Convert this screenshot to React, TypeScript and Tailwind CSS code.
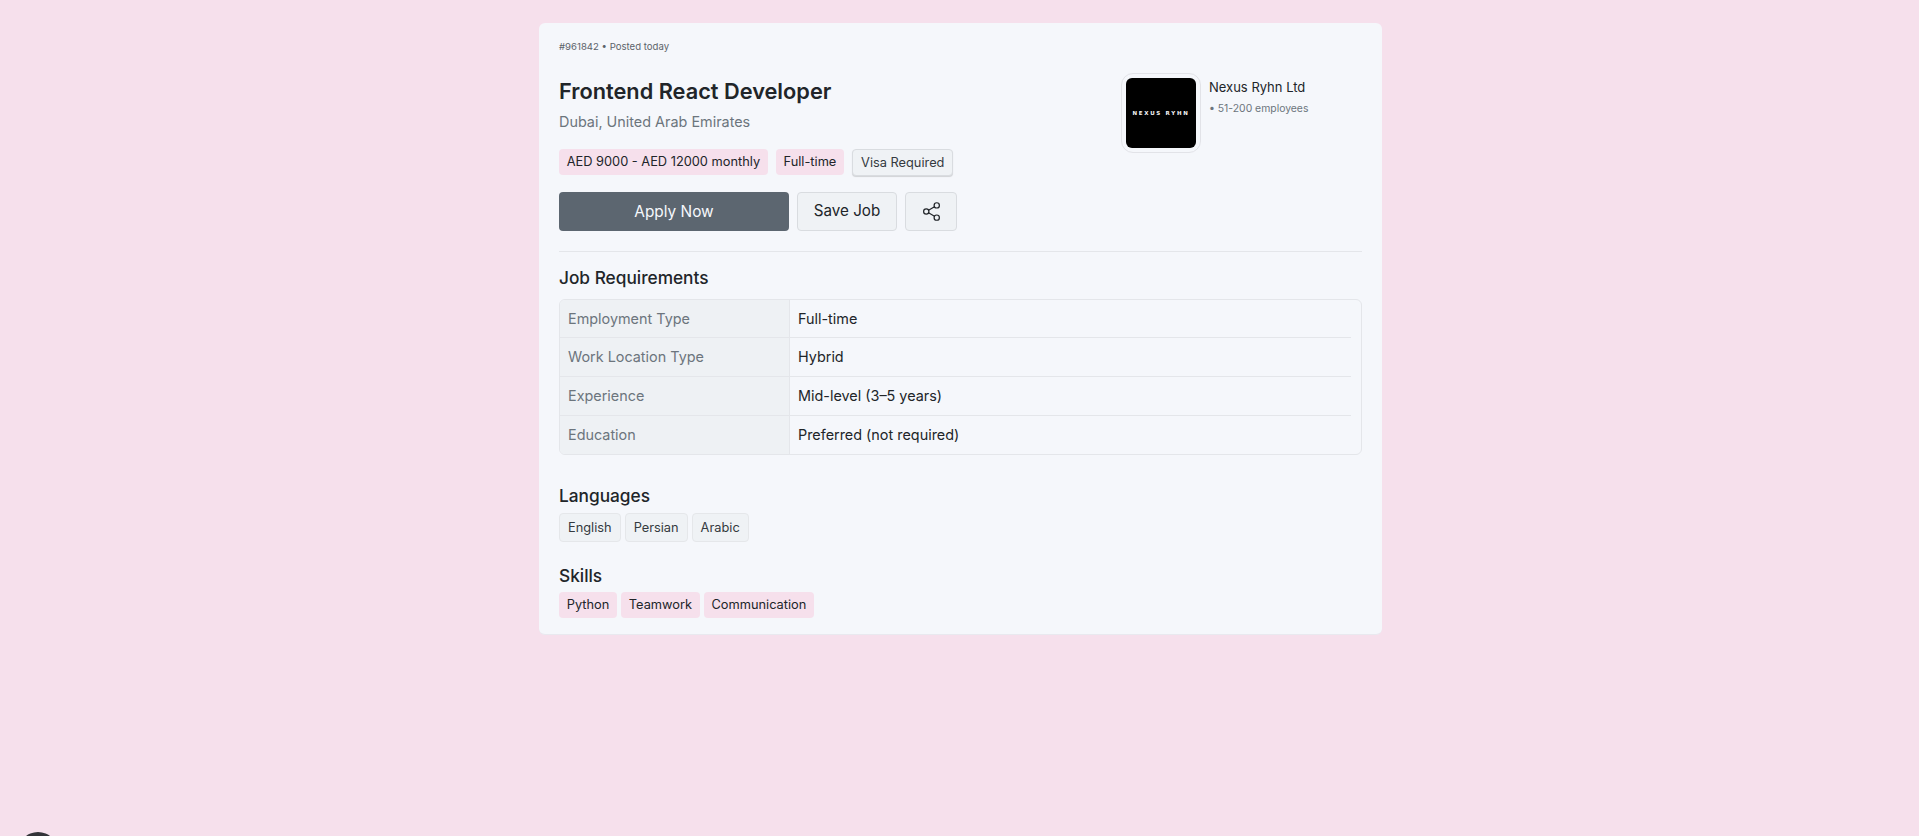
import React from 'react';
import { Share2 } from 'lucide-react';

const requirements = [
  { label: 'Employment Type', value: 'Full-time' },
  { label: 'Work Location Type', value: 'Hybrid' },
  { label: 'Experience', value: 'Mid-level (3–5 years)' },
  { label: 'Education', value: 'Preferred (not required)' },
];

const PinkChip: React.FC<{ children: React.ReactNode }> = ({ children }) => (
  <span className="flex h-[26px] items-center rounded bg-[#f6e0ec] px-[7.75px] text-[12.8px] text-[#212529]">{children}</span>
);

const GreyChip: React.FC<{ children: React.ReactNode }> = ({ children }) => (
  <span className="flex h-[29px] items-center rounded border border-[#e5e7ea] bg-[#eff2f5] px-2 text-[12.8px] text-[#343a40]">
    {children}
  </span>
);

const App: React.FC = () => {
  return (
    <div className="relative h-[836px] overflow-hidden bg-[#f6e0ec] pt-[23px] [font-family:Inter,sans-serif]">
      <div className="ml-[539px] h-[612px] w-[843px] rounded-md border-b border-[#e9e9ef] bg-[#f5f7fb] px-5 pt-4">
        <div className="flex">
          <div className="flex-1">
            <p className="text-[9.6px] leading-4 text-[#5c636a]">#961842 • Posted today</p>
            <h1 className="mt-[21px] text-[21.75px] font-semibold leading-[30px] text-[#212529]">Frontend React Developer</h1>
            <p className="mt-[5px] text-[14.4px] leading-[22px] text-[#6c757d]">Dubai, United Arab Emirates</p>
            <div className="mt-[16px] flex items-start gap-2">
              <PinkChip>AED 9000 - AED 12000 monthly</PinkChip>
              <PinkChip>Full-time</PinkChip>
              <span className="flex h-[27px] items-center rounded border border-[#d9dce0] bg-[#eff2f5] px-2 text-[12.8px] text-[#343a40] shadow-[0_1px_1px_rgba(0,0,0,0.15)]">
                Visa Required
              </span>
            </div>
          </div>
          <div className="mt-[34px] flex w-[241px] gap-2">
            <div className="flex h-[80px] w-[80px] shrink-0 items-center justify-center rounded-xl border border-[#e2e3e8] p-1">
              <div className="flex h-[70px] w-[70px] items-center justify-center rounded-md bg-black">
                <span className="whitespace-nowrap text-[5.5px] font-bold tracking-[1.7px] text-[#f5f5f5] [font-family:'DejaVu_Sans',sans-serif]">NEXUS RYHN</span>
              </div>
            </div>
            <div className="pt-[4px]">
              <p className="text-[13px] leading-5 text-[#212529]">Nexus Ryhn Ltd</p>
              <p className="mt-[4px] text-[10.4px] leading-4 text-[#6c757d]">• 51-200 employees</p>
            </div>
          </div>
        </div>

        <div className="mt-[16px] flex gap-2 border-b border-[#e4e6ea] pb-5">
          <button className="flex h-[39px] w-[230px] items-center justify-center rounded bg-[#5c6670] text-[15.4px] text-[#f6f8fc]">
            Apply Now
          </button>
          <button className="flex h-[39px] w-[100px] items-center justify-center rounded border border-[#d9dce0] bg-[#eff2f5] text-[15.2px] text-[#212529]">
            Save Job
          </button>
          <button className="flex h-[39px] w-[52px] items-center justify-center rounded border border-[#d9dce0] bg-[#eff2f5] text-[#212529]">
            <Share2 className="h-[21px] w-[21px]" strokeWidth={1.4} />
          </button>
        </div>

        <h2 className="mt-[14px] text-[17.28px] font-medium leading-6 text-[#212529]">Job Requirements</h2>
        <div className="mt-[9px] overflow-hidden rounded-md border border-[#e4e6ea]">
          {requirements.map((row, i) => (
            <div key={row.label} className={`flex ${i === 0 || i === requirements.length - 1 ? 'h-[38px]' : 'h-[39px]'}`}>
              <div
                className={`flex w-[230px] items-center border-r border-[#e4e6ea] bg-[#eef1f4] pl-2 text-[14.4px] text-[#6c757d] ${
                  i < requirements.length - 1 ? 'border-b' : ''
                }`}
              >
                {row.label}
              </div>
              <div
                className={`mr-[10px] flex flex-1 items-center border-[#e4e6ea] pl-2 text-[14.4px] text-[#212529] ${
                  i < requirements.length - 1 ? 'border-b' : ''
                }`}
              >
                {row.value}
              </div>
            </div>
          ))}
        </div>

        <h2 className="mt-[29px] text-[17.28px] font-medium leading-6 text-[#212529]">Languages</h2>
        <div className="mt-[5px] flex gap-1">
          <GreyChip>English</GreyChip>
          <GreyChip>Persian</GreyChip>
          <GreyChip>Arabic</GreyChip>
        </div>

        <h2 className="mt-[22px] text-[17.28px] font-medium leading-6 text-[#212529]">Skills</h2>
        <div className="mt-[4px] flex gap-1">
          <PinkChip>Python</PinkChip>
          <PinkChip>Teamwork</PinkChip>
          <PinkChip>Communication</PinkChip>
        </div>
      </div>

      <div className="absolute left-[18px] top-[832px] h-10 w-10 rounded-full bg-[#333338]" />
    </div>
  );
};

export default App;
